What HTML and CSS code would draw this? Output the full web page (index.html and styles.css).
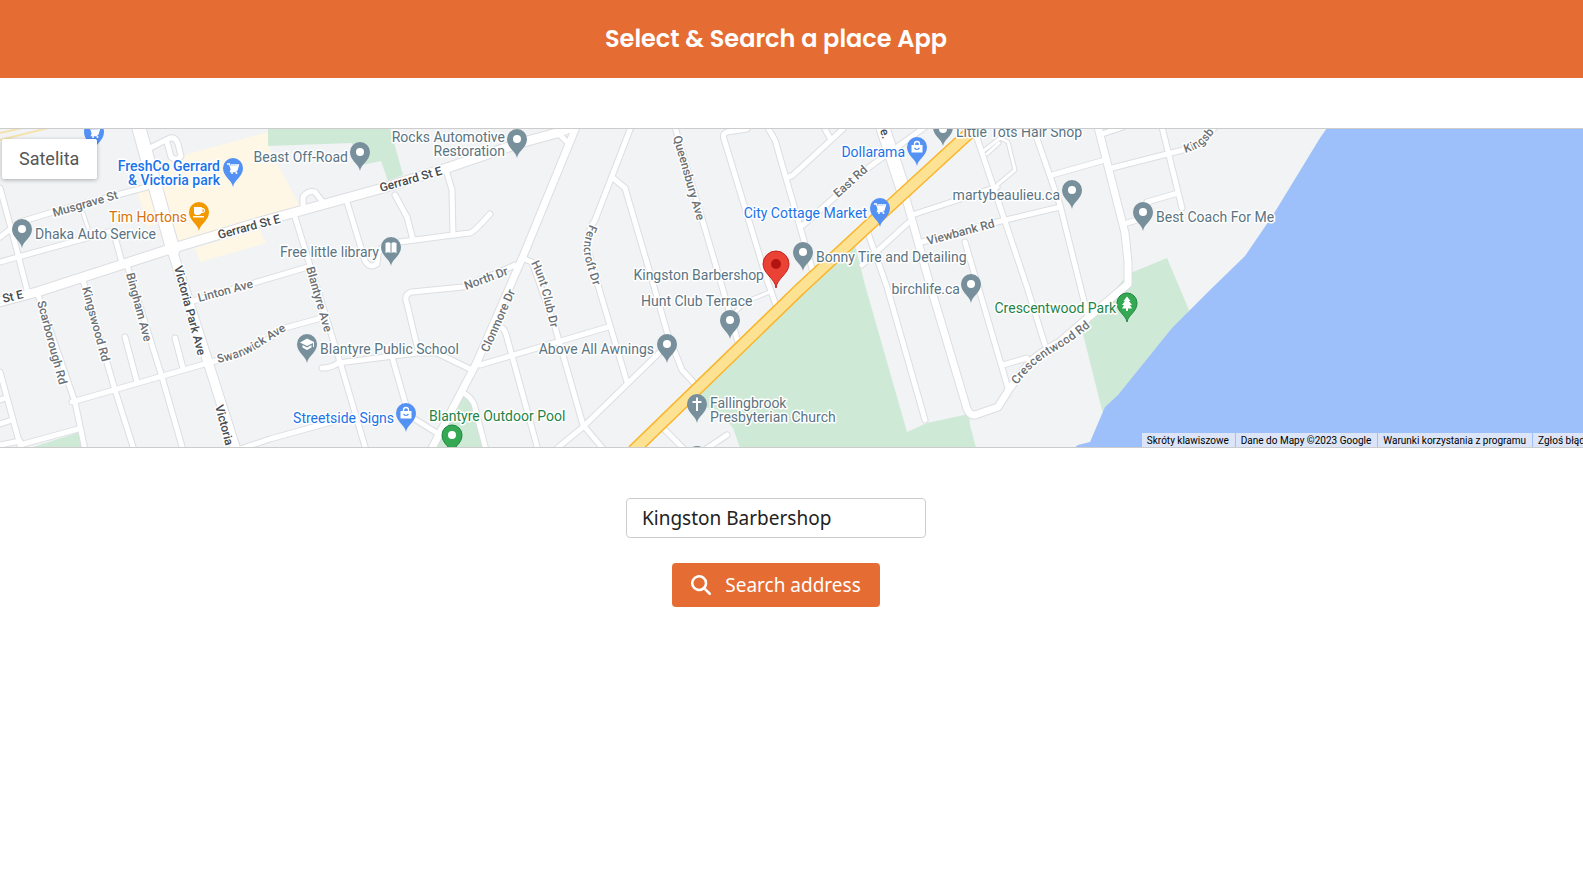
FILE: index.html
```html
<!DOCTYPE html>
<html lang="pl">
<head>
<meta charset="utf-8">
<meta name="viewport" content="width=device-width, initial-scale=1">
<title>Select &amp; Search a place App</title>
<link rel="stylesheet" href="styles.css">
</head>
<body>
<header class="header"><h1 class="title">Select &amp; Search a place App</h1></header>
<main class="main">
<section class="map" aria-label="Map">
<svg class="map-canvas" viewBox="0 129 1583 318" preserveAspectRatio="xMidYMid slice">
<defs>
<g id="thin">
<path d="M83 213l5 15M982 152l18-14 8 4 7 28-18 15M987 154l12-11M733 315q8-10 17-15l22-9"/>
</g>
<g id="local">
<path d="M0 188L15 243 27 290M0 237L20 222 53 212 147 187M0 262L112 231M115 237L122 263"/>
<path d="M150 148L170 138Q176 137 178 144L181 156Q177 162 171 157L167 142"/>
<path d="M37 292L75 402 85 450M83 280L115 390 134 450M127 265L162 377 183 450M125 337L137 382M175 338L183 368"/>
<path d="M72 402L208 363 240 354Q262 345 285 328L325 317"/>
<path d="M0 372L20 445M0 400L6 398M0 424L12 420M0 445L20 441M20 445L78 429M240 449L270 439 353 416"/>
<path d="M193 301L308 267M295 217L340 362 366 450M303 205V197Q308 190 315 192L322 201"/>
<path d="M347 202L365 261Q370 269 377 264L378 254Q382 244 392 243L453 235 470 233Q474 232 490 214"/>
<path d="M395 195L407 217 413 240M447 173L452 190 453 235"/>
<path d="M418 350L407 304Q403 294 412 292L463 287 504 270 515 265"/>
<path d="M558 133L566 141M522 258L532 262 555 327 583 425 604 450"/>
<path d="M631 127L595 220Q585 235 588 250L600 292 627 382"/>
<path d="M613 178L625 188 655 290 667 332 682 370 695 384"/>
<path d="M675 127L723 290 738 342M747 129L727 132Q722 134 724 139L767 280 777 308"/>
<path d="M768 128L775 140 813 272M843 129L793 175 787 178M825 129L830 138M925 127L868 168 803 225"/>
<path d="M912 215L997 187M908 223L862 265M868 233L887 287 925 420M918 243L993 223 1060 207"/>
<path d="M965 242L1008 388M1003 365L1027 358M977 138L1027 287 1045 345M1033 127L1060 205 1088 317"/>
<path d="M1052 175L1105 160M1112 168L1183 150 1202 141 1215 127M1102 134L1123 127M1162 127L1182 208M1147 202L1178 193M1127 223L1137 220"/>
<path d="M555 450L583 427 660 352M480 365L608 327M322 368Q332 368 338 363L417 353 437 353 472 370"/>
<path d="M392 357L405 402 413 418 437 433M463 393Q470 396 474 404L486 450M500 327Q504 328 506 334L538 450"/>
<path d="M663 428L685 450M727 435L706 449"/>
</g>
<g id="avenue">
<path d="M576 127L524 254 477 362 431 450M905 195L930 285 965 402Q968 416 975 415L998 407 1010 388 1027 366Q1035 355 1060 342L1083 322 1128 284V262L1125 233 1098 127"/>
</g>
<g id="arterial"><path d="M-5 303L37 292 167 250 260 222 383 188 447 168 520 143 557 133 572 127M172 250L208 362 236 450"/></g>
<g id="boulevard"><path d="M138 125L173 250M882 125L904 192"/></g>
<path id="highway" d="M978 125L880 215 800 289 633 451"/>
<path id="pin" d="M0 19C-1 12-10 9-10 0A10 10 0 0 1 10 0C10 9 1 12 0 19Z"/>
<g id="cart"><path d="M-5-4h2.500l2 6h5.500l1.500-5h-7.500M-1 2l-.500 1.500h6" fill="none" stroke="#fff" stroke-width="1.300"/><path d="M-2-2h8l-1.500 4h-5z"/><circle cx="0" cy="5" r="1"/><circle cx="4.500" cy="5" r="1"/></g>
<g id="bag"><path d="M-5.500-2h11v7.500h-11z"/><path d="M-2.500-2V-3a2.500 2.500 0 0 1 5 0v1" fill="none" stroke="#fff" stroke-width="1.300"/><path d="M-2.500 1q2.500 3 5 0" fill="none" stroke="#5491f5" stroke-width="1.200"/></g>
<path id="curve-swanwick" d="M218 363Q243 358 258 348T300 322"/>
<path id="curve-crescent" d="M1017 385Q1033 363 1055 351T1100 318"/>
<path id="curve-hunt" d="M531 263Q540 280 544 300L556 350"/>
<path id="curve-fern" d="M590 224Q583 240 584 252T600 305"/>
<path id="curve-kings" d="M1185 153Q1200 149 1208 140T1222 120"/>
</defs>
<rect class="land" x="0" y="100" width="1583" height="380"/>
<path class="commercial" d="M145 166L213 147 268 132V145L300 207 178 243ZM138 193L147 188 160 223 147 227ZM195 248L260 230 266 243 200 262Z"/>
<path class="park" d="M268 128H390L403 175 388 181 381 161 362 165 352 143 268 146ZM30 448L80 432 84 448ZM690 393L855 245 865 285 907 432 927 423 969 414 970 425 976 448H740L733 428Q725 418 713 412ZM463 395L473 405 484 448H433ZM1128 274L1155 263 1167 258 1189 310 1172 335 1103 414 1082 330ZM627 129h7v2h-7z"/>
<path class="water" d="M1327 128L1320 138 1273 215 1245 256 1210 290 1172 328 1118 395 1105 407 1090 442 1078 445 1074 448H1584V128Z"/>
<path class="rail" d="M0 133L22 128M0 140L48 128"/>
<g class="case"><use href="#thin" class="w5"/><use href="#local" class="w7"/><use href="#avenue" class="w10"/><use href="#arterial" class="w11"/><use href="#boulevard" class="w15"/></g>
<g class="road"><use href="#thin" class="w3"/><use href="#local" class="w5"/><use href="#avenue" class="w8"/><use href="#arterial" class="w9"/><use href="#boulevard" class="w13"/></g>
<use href="#highway" class="highway-case"/><use href="#highway" class="highway"/>
<g class="street">
<text transform="translate(54 217) rotate(-16)">Musgrave St</text>
<text transform="translate(199 302) rotate(-15)">Linton Ave</text>
<text transform="translate(466 290) rotate(-20)">North Dr</text>
<text transform="translate(488 353) rotate(-66)">Clonmore Dr</text>
<text transform="translate(928 245) rotate(-15)">Viewbank Rd</text>
<text transform="translate(838 198) rotate(-42)">East Rd</text>
<text transform="translate(37 302) rotate(75)">Scarborough Rd</text>
<text transform="translate(82 288) rotate(75)">Kingswood Rd</text>
<text transform="translate(126 274) rotate(75)">Bingham Ave</text>
<text transform="translate(306 268) rotate(74)">Blantyre Ave</text>
<text transform="translate(673 137) rotate(74)">Queensbury Ave</text>
<text><textPath href="#curve-swanwick">Swanwick Ave</textPath></text>
<text><textPath href="#curve-crescent">Crescentwood Rd</textPath></text>
<text><textPath href="#curve-hunt">Hunt Club Dr</textPath></text>
<text><textPath href="#curve-fern">Ferncroft Dr</textPath></text>
<text><textPath href="#curve-kings">Kingsb</textPath></text>
</g>
<g class="street major">
<text transform="translate(219 239) rotate(-15)">Gerrard St E</text>
<text transform="translate(381 192) rotate(-16)">Gerrard St E</text>
<text transform="translate(-6 305) rotate(-13)">d St E</text>
<text transform="translate(174 267) rotate(75)">Victoria Park Ave</text>
<text transform="translate(215 406) rotate(75)">Victoria</text>
<text transform="translate(880 130) rotate(75)">e.</text>
</g>
<g class="pins slate">
<use href="#pin" x="22" y="229"/><use href="#pin" x="360" y="152"/><use href="#pin" x="517" y="139"/><use href="#pin" x="391" y="247"/><use href="#pin" x="307" y="344"/><use href="#pin" x="730" y="320"/><use href="#pin" x="667" y="344"/><use href="#pin" x="697" y="404"/><use href="#pin" x="697" y="456"/><use href="#pin" x="803" y="252"/><use href="#pin" x="943" y="127"/><use href="#pin" x="971" y="284"/><use href="#pin" x="1072" y="190"/><use href="#pin" x="1143" y="212"/>
</g>
<g class="pins blue"><use href="#pin" x="94" y="132"/><use href="#pin" x="233" y="168"/><use href="#pin" x="406" y="413"/><use href="#pin" x="880" y="208"/><use href="#pin" x="917" y="147"/></g>
<g class="pins orange"><use href="#pin" x="199" y="212"/></g>
<g class="pins green"><use href="#pin" x="452" y="435"/><use href="#pin" x="1127" y="303"/></g>
<g class="glyph">
<circle cx="22" cy="229" r="4"/><circle cx="360" cy="152" r="4"/><circle cx="517" cy="139" r="4"/><circle cx="730" cy="320" r="4"/><circle cx="667" cy="344" r="4"/><circle cx="803" cy="252" r="4"/><circle cx="943" cy="129" r="4"/><circle cx="971" cy="284" r="4"/><circle cx="1072" cy="190" r="4"/><circle cx="1143" cy="212" r="4"/><circle cx="452" cy="435" r="4"/>
<use href="#cart" x="93" y="132"/><use href="#cart" x="232" y="168"/><use href="#cart" x="879" y="208"/><use href="#bag" x="406" y="413"/><use href="#bag" x="917" y="147"/>
<path d="M194 207h8v1h1q2 0 2 2.500t-3 2.500h-.500q-1 2-3 2h-2q-2.500 0-2.500-3zM202.500 209v3q1.500 0 1.500-1.500t-1.500-1.500zM193 216h11v1.500h-11z" fill-rule="evenodd"/>
<path d="M385.500 243q3-1.500 5 0v10q-2-1.500-5 0zM396.500 243q-3-1.500-5 0v10q2-1.500 5 0z"/>
<path d="M307 338.500l7 3.500v5h-1v-4l-6 3-7-3.500zM302.500 345l4.500 2.500 4.500-2.500v2.500l-4.500 2.500-4.500-2.500z"/>
<path d="M696 397.500h2v3.500h3.500v2H698v8h-2v-8h-3.500v-2h3.500z"/>
<path d="M1127 296.500l3.500 4.500h-1.500l3 4h-2l2 3.500h-4v2.500h-2v-2.500h-4l2-3.500h-2l3-4h-1.500z"/>
</g>
<g class="marker"><path d="M776 288C775 278 763 274 763 264A13 13 0 0 1 789 264C789 274 777 278 776 288Z"/><circle cx="776" cy="264" r="5"/></g>
<g class="place">
<text x="35" y="239">Dhaka Auto Service</text>
<text class="end" x="348" y="162">Beast Off-Road</text>
<text class="end" x="505" y="142">Rocks Automotive</text>
<text class="end" x="505" y="156">Restoration</text>
<text class="end" x="379" y="257">Free little library</text>
<text x="320" y="354">Blantyre Public School</text>
<text class="end" x="764" y="280">Kingston Barbershop</text>
<text x="641" y="306">Hunt Club Terrace</text>
<text class="end" x="654" y="354">Above All Awnings</text>
<text x="710" y="408">Fallingbrook</text>
<text x="710" y="422">Presbyterian Church</text>
<text x="816" y="262">Bonny Tire and Detailing</text>
<text x="956" y="137">Little Tots Hair Shop</text>
<text class="end" x="1060" y="200">martybeaulieu.ca</text>
<text class="end" x="960" y="294">birchlife.ca</text>
<text x="1156" y="222">Best Coach For Me</text>
</g>
<g class="place shop">
<text class="end strong" x="220" y="171">FreshCo Gerrard</text>
<text class="end strong" x="220" y="185">&amp; Victoria park</text>
<text class="end" x="394" y="423">Streetside Signs</text>
<text class="end" x="867" y="218">City Cottage Market</text>
<text class="end" x="905" y="157">Dollarama</text>
</g>
<text class="place food end" x="187" y="222">Tim Hortons</text>
<g class="place nature"><text x="429" y="421">Blantyre Outdoor Pool</text><text class="end" x="1116" y="313">Crescentwood Park</text></g>
</svg>
<button class="satellite" type="button">Satelita</button>
<div class="attribution"><button type="button">Skróty klawiszowe</button><span>Dane do Mapy ©2023 Google</span><a href="#terms">Warunki korzystania z programu</a><a href="#report">Zgłoś błąd w mapie</a></div>
</section>
<form class="search">
<input class="search-input" type="text" aria-label="Address" value="Kingston Barbershop">
<button class="search-button" type="button"><svg class="search-icon" viewBox="0 0 512 512" aria-hidden="true"><path d="M416 208c0 46-15 88-40 123l127 126c12 13 12 33 0 46s-33 12-46 0L331 376A208 208 0 1 1 416 208zM208 352a144 144 0 1 0 0-288 144 144 0 1 0 0 288z"/></svg>Search address</button>
</form>
</main>
</body>
</html>
```
FILE: styles.css
```css
* { box-sizing: border-box; }
body { margin: 0; background: #fff; font-family: Tahoma, "Noto Sans", sans-serif; overflow-x: hidden; }
.header { display: flex; justify-content: center; align-items: center; min-height: 78px; padding: 20px 31px 20px 0; background: #e56d33; }
.title { margin: 0; color: #fff; font: 600 24px/38px Poppins, Inter, sans-serif; }
.main { display: flex; flex-direction: column; gap: 50px; padding-top: 50px; }
.map { position: relative; height: 320px; overflow: hidden; border-top: 1px solid #ccc; border-bottom: 1px solid #ccc; font-family: Roboto, sans-serif; }
.map-canvas { display: block; width: 100%; height: 100%; }
.land { fill: #f1f3f4; }
.commercial { fill: #fef7e6; }
.park { fill: #ceead6; }
.water { fill: #9dc0fa; }
.rail { fill: none; stroke: #f5e3ad; stroke-width: 2; }
.case, .road { fill: none; stroke-linecap: round; stroke-linejoin: round; }
.case { stroke: #dcdee2; }
.road { stroke: #fff; }
.w3 { stroke-width: 3; }
.w5 { stroke-width: 5; }
.w7 { stroke-width: 7; }
.w8 { stroke-width: 7; }
.w9 { stroke-width: 9; }
.w10 { stroke-width: 9; }
.w11 { stroke-width: 11; }
.w13 { stroke-width: 13; }
.w15 { stroke-width: 15; }
.highway-case { fill: none; stroke: #f9b52c; stroke-width: 13; }
.highway { fill: none; stroke: #fde293; stroke-width: 10; }
.street { font-size: 12px; font-weight: 500; fill: #6b7075; stroke: #fff; stroke-width: 3; paint-order: stroke; stroke-linejoin: round; }
.major { fill: #45494e; }
.place { font-size: 14px; fill: #5a7482; stroke: #fff; stroke-width: 3; paint-order: stroke; stroke-linejoin: round; }
.shop { fill: #1a73e8; }
.food { fill: #d97309; }
.nature { fill: #1e8449; }
.strong { font-weight: 500; }
.end { text-anchor: end; }
.slate { fill: #78909c; }
.blue { fill: #5491f5; }
.orange { fill: #f29900; }
.green { fill: #34a853; stroke: #1e8541; }
.glyph { fill: #fff; }
.marker { fill: #ea4335; stroke: #c5221f; }
.marker circle { fill: #b31412; stroke: none; }
.satellite { position: absolute; top: 10px; left: 2px; height: 40px; padding: 0 18px 0 17px; border: 0; border-radius: 2px; background: #fff; box-shadow: 0 1px 4px rgba(0, 0, 0, .3); color: #565656; font: 18px/40px Roboto, sans-serif; }
.attribution { position: absolute; right: -48px; bottom: 0; display: flex; height: 14px; background: rgba(245, 245, 245, .7); white-space: nowrap; font-size: 10px; line-height: 15px; }
.attribution > * { padding: 0 6px 0 5px; border: 0; border-left: 1px solid #9dc0fa; background: none; color: #000; font: inherit; text-decoration: none; }
.attribution > :first-child { padding-left: 5px; border-left: 0; }
.search { display: flex; flex-direction: column; align-items: center; gap: 25px; padding-right: 31px; }
.search-input { width: 300px; height: 40px; padding: 0 15px; border: 1px solid #ccc; border-radius: 4px; background: #fff; color: #222; font: 19px/30px Tahoma, "Noto Sans", sans-serif; outline: 0; }
.search-button { display: flex; align-items: center; gap: 14px; height: 44px; padding: 0 19px; border: 0; border-radius: 4px; background: #e56d33; color: #fff; font: 19px/30px Tahoma, "Noto Sans", sans-serif; }
.search-icon { width: 20px; height: 20px; fill: #fff; }
```
